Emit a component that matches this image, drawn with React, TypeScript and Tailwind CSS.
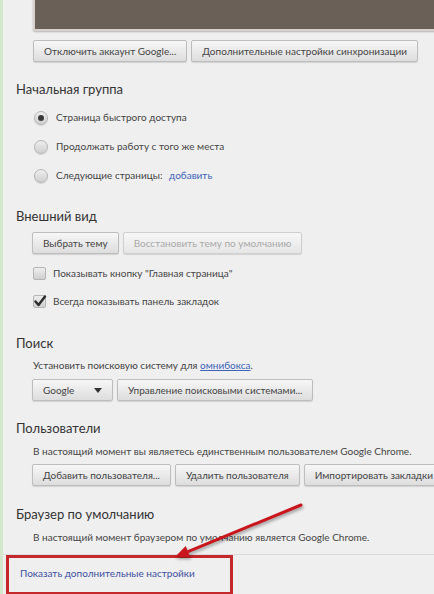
import React from "react";

const Btn = ({
  children,
  disabled,
  className = "",
}: {
  children: React.ReactNode;
  disabled?: boolean;
  className?: string;
}) => (
  <div
    className={
      "h-[22px] shrink-0 flex items-center px-[10px] rounded-[2px] border border-[#bdbdbd] bg-gradient-to-b from-[#f7f7f7] to-[#dddddd] shadow-[0_1px_1px_rgba(0,0,0,0.12)] whitespace-nowrap text-[10px] " +
      (disabled ? "text-[#a9a9a9] from-[#f4f4f4] to-[#e6e6e6] border-[#cfcfcf] " : "text-[#444] ") +
      className
    }
  >
    {children}
  </div>
);

const Radio = ({ checked, label }: { checked?: boolean; label: React.ReactNode }) => (
  <div className="flex items-center h-[29px] gap-[8px]">
    <div className="w-[14px] h-[14px] rounded-full border border-[#b5b5b5] bg-gradient-to-b from-[#eeeeee] to-[#cfcfcf] flex items-center justify-center shadow-[0_1px_1px_rgba(0,0,0,0.1)]">
      {checked && <div className="w-[6px] h-[6px] rounded-full bg-[#3a3a3a]" />}
    </div>
    <span className="text-[10px] text-[#444]">{label}</span>
  </div>
);

const Check = ({ checked, label }: { checked?: boolean; label: string }) => (
  <div className="flex items-center h-[28px] gap-[7px]">
    <div className="relative w-[13px] h-[13px] rounded-[2px] border border-[#b5b5b5] bg-gradient-to-b from-[#eeeeee] to-[#d0d0d0]">
      {checked && (
        <svg viewBox="0 0 14 14" className="absolute -left-[1px] -top-[2px] w-[14px] h-[14px]">
          <path d="M2.5 7.5 L5.5 11 L12 2.5" fill="none" stroke="#2b2b2b" strokeWidth="2.4" strokeLinecap="round" strokeLinejoin="round" />
        </svg>
      )}
    </div>
    <span className="text-[10px] text-[#444]">{label}</span>
  </div>
);

const Heading = ({ children, className = "" }: { children: string; className?: string }) => (
  <div className={"text-[13px] leading-[18px] text-[#333] " + className}>{children}</div>
);

export default function App() {
  return (
    <div
      className="relative w-[434px] h-[594px] overflow-hidden bg-[#efefef] border-l-[3px] border-[#d3e8cb]"
      style={{ fontFamily: 'Lato, "Noto Sans", sans-serif' }}
    >
      <div className="flex flex-col pl-[13px]">
        {/* sync box */}
        <div className="ml-[17px] h-[33px] -mt-[2px] bg-[#6a6058] border-2 border-[#d6d1cc] rounded-[2px] shadow-[0_1px_2px_rgba(0,0,0,0.25)] w-[420px]" />
        <div className="flex gap-[4px] ml-[17px] mt-[9px]">
          <Btn>Отключить аккаунт Google...</Btn>
          <Btn>Дополнительные настройки синхронизации</Btn>
        </div>

        <Heading className="mt-[18px]">Начальная группа</Heading>
        <div className="flex flex-col ml-[18px] mt-[5px]">
          <Radio checked label="Страница быстрого доступа" />
          <Radio label="Продолжать работу с того же места" />
          <Radio
            label={
              <>
                Следующие страницы: <span className="text-[#3b63b8] ml-[4px]">добавить</span>
              </>
            }
          />
        </div>

        <Heading className="mt-[17px]">Внешний вид</Heading>
        <div className="flex gap-[4px] ml-[16px] mt-[7px]">
          <Btn>Выбрать тему</Btn>
          <Btn disabled>Восстановить тему по умолчанию</Btn>
        </div>
        <div className="flex flex-col ml-[17px] mt-[5px]">
          <Check label={'Показывать кнопку "Главная страница"'} />
          <Check checked label="Всегда показывать панель закладок" />
        </div>

        <Heading className="mt-[19px]">Поиск</Heading>
        <div className="ml-[17px] mt-[5px] text-[10px] text-[#444] leading-[16px]">
          Установить поисковую систему для <span className="text-[#3b63b8] underline">омнибокса</span>.
        </div>
        <div className="flex gap-[4px] ml-[16px] mt-[6px]">
          <Btn className="w-[81px] justify-between">
            <span>Google</span>
            <svg viewBox="0 0 8 5" className="w-[8px] h-[5px]">
              <path d="M0 0 L8 0 L4 5 Z" fill="#333" />
            </svg>
          </Btn>
          <Btn>Управление поисковыми системами...</Btn>
        </div>

        <Heading className="mt-[18px]">Пользователи</Heading>
        <div className="ml-[17px] mt-[6px] text-[10px] text-[#444] leading-[16px] whitespace-nowrap">
          В настоящий момент вы являетесь единственным пользователем Google Chrome.
        </div>
        <div className="flex gap-[4px] ml-[16px] mt-[5px]">
          <Btn>Добавить пользователя...</Btn>
          <Btn>Удалить пользователя</Btn>
          <Btn>Импортировать закладки</Btn>
        </div>

        <Heading className="mt-[19px]">Браузер по умолчанию</Heading>
        <div className="ml-[17px] mt-[6px] text-[10px] text-[#444] leading-[16px] whitespace-nowrap">
          В настоящий момент браузером по умолчанию является Google Chrome.
        </div>
      </div>

      <div className="mt-[9px] border-t border-[#dcdcdc] -ml-[3px] pl-[6px]">
        <div className="w-[227px] h-[40px] border-[3px] border-[#c4282b] pl-[11px] pt-[8px] text-[10px] text-[#3d4fa0]">
          Показать дополнительные настройки
        </div>
      </div>

      <svg className="absolute inset-0 w-[434px] h-[594px] pointer-events-none" viewBox="0 0 434 594">
        <g style={{ filter: "drop-shadow(1px 2px 1.5px rgba(0,0,0,0.35))" }}>
          <path d="M298 505 L185 551.6" stroke="#c8161c" strokeWidth="3" strokeLinecap="round" />
          <path d="M172 557 L187.2 557.2 L182.7 546.1 Z" fill="#c8161c" />
        </g>
      </svg>
    </div>
  );
}
